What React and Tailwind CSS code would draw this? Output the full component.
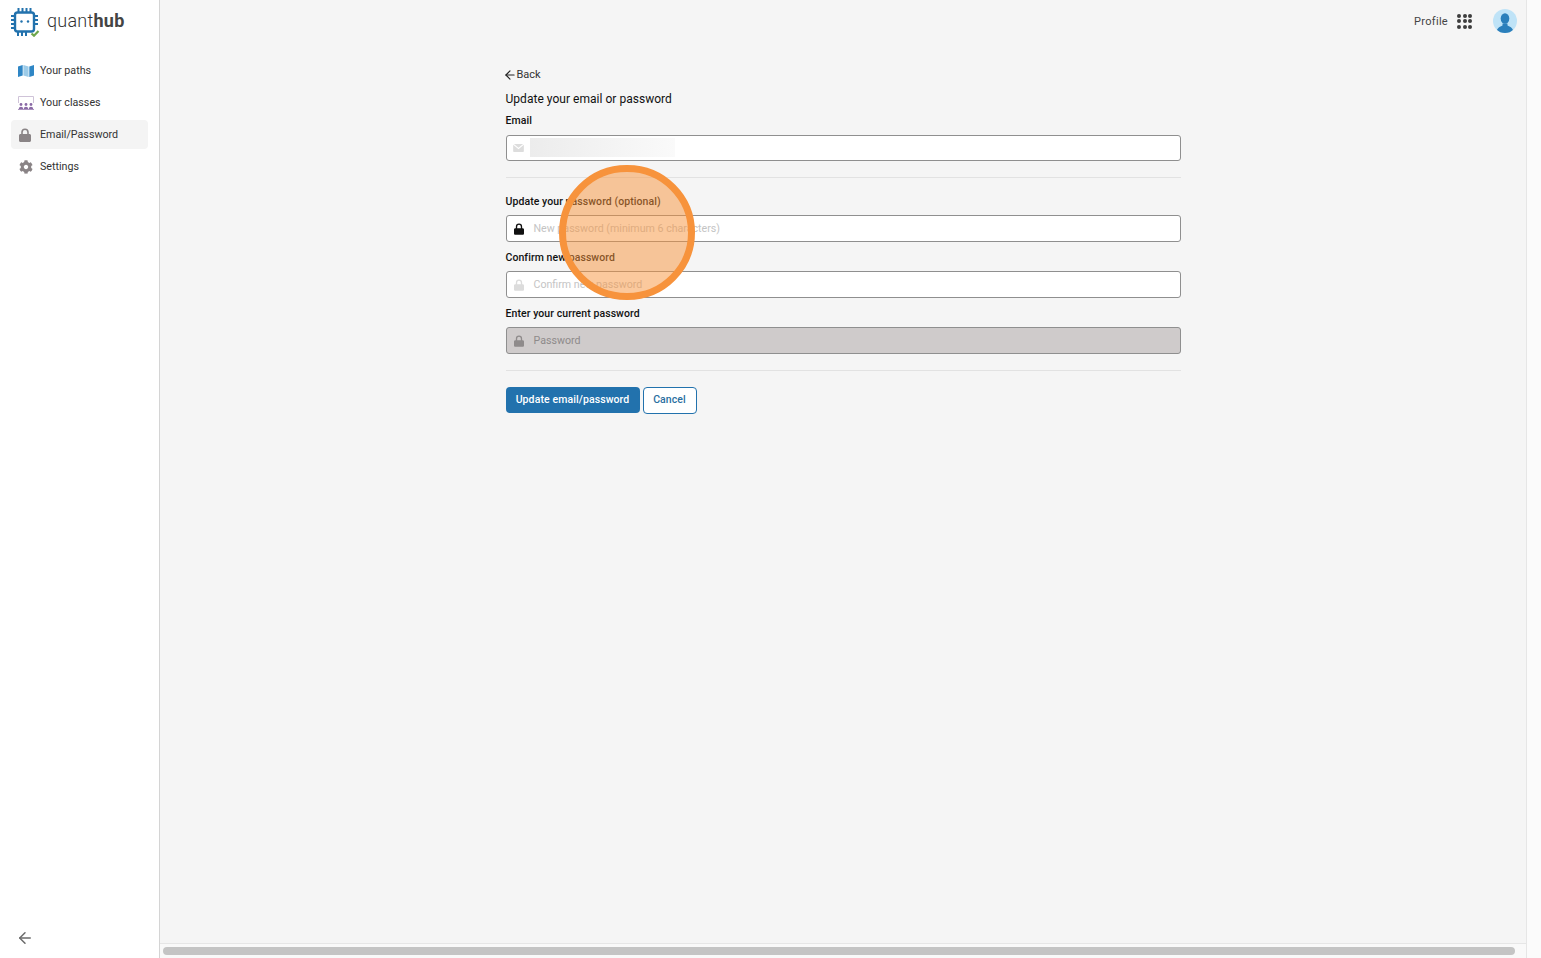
import React from "react";
import { ArrowLeft } from "lucide-react";
import { FaCog } from "react-icons/fa";

const Lock = ({ className }) => (
  <svg viewBox="0 0 12 14" className={className} fill="currentColor">
    <path d="M2.200 6V4.200a3.800 3.800 0 0 1 7.600 0V6h.7c.8 0 1.500.7 1.500 1.500v5c0 .8-.7 1.500-1.500 1.500h-9C.7 14 0 13.300 0 12.500v-5C0 6.700.7 6 1.500 6h.7zm1.600 0h4.400V4.200a2.200 2.200 0 0 0-4.400 0V6z" />
  </svg>
);

const Logo = () => (
  <svg viewBox="0 0 30 30" className="w-[30px] h-[30px] shrink-0" fill="none">
    <rect x="5" y="5.500" width="19" height="19" rx="2.500" stroke="#2272ad" strokeWidth="2.400" />
    <path d="M8.500 1v4M12.500 1v4M16.500 1v4M20.500 1v4M1 9h4M1 13h4M1 17h4M1 21h4M24 9h4M24 13h4M24 17h4M8 25v4M12 25v4M16 25v4" stroke="#2272ad" strokeWidth="2" />
    <circle cx="11.500" cy="14.500" r="1.200" fill="#2272ad" />
    <circle cx="18" cy="14.500" r="1.200" fill="#2272ad" />
    <path d="M21.500 26.500l2.500 2.200 4.500-4.700" stroke="#6fa64c" strokeWidth="2.200" />
  </svg>
);

const MapIcon = () => (
  <svg viewBox="0 0 16 12" className="w-[16px] h-[12px]">
    <path d="M0 1.500 4.700 0v10.500L0 12z" fill="#2f86c5" />
    <path d="M5.400 0l5.200 1.500V12L5.400 10.500z" fill="#9ccbe8" />
    <path d="M11.300 1.500 16 0v10.500L11.300 12z" fill="#2f86c5" />
  </svg>
);

const ClassIcon = () => (
  <svg viewBox="0 0 16 14" className="w-[16px] h-[14px]" fill="none">
    <path d="M.500 7V.500h15V7" stroke="#cfc3d8" strokeWidth="1" />
    <g fill="#8a6aa6">
      <circle cx="3" cy="8.500" r="1.400" />
      <circle cx="8" cy="8.500" r="1.400" />
      <circle cx="13" cy="8.500" r="1.400" />
      <path d="M.800 13c0-3 4.400-3 4.400 0zM5.800 13c0-3 4.400-3 4.400 0zM10.800 13c0-3 4.400-3 4.400 0z" />
    </g>
    <path d="M0 13.600h16" stroke="#8a6aa6" strokeWidth=".8" />
  </svg>
);

const NavItem = ({ icon, label, active }) => (
  <div className={`flex items-center h-[29px] pl-[7px] rounded-[4px] ${active ? "bg-[#f4f4f4]" : ""}`}>
    <span className="w-[22px] flex justify-start items-center">{icon}</span>
    <span className="text-[10.700px] pt-[2px] text-[#333333]">{label}</span>
  </div>
);

const Field = ({ icon, placeholder, disabled, h = "h-[27px]" }) => (
  <div className={`${h} flex items-center rounded-[3px] border border-[#8f8f8f] ${disabled ? "bg-[#cfcbcb]" : "bg-white"}`}>
    <span className="w-[27px] flex justify-center pr-[3px]">{icon}</span>
    <span className={`text-[10.650px] pt-[1px] ${disabled ? "text-[#8e8a8a]" : "text-[#c4c4c4]"}`}>{placeholder}</span>
  </div>
);

const Label = ({ children, className = "" }) => (
  <div className={`text-[10.500px] leading-[14px] tracking-[0.07px] font-medium text-[#111111] ${className}`}>{children}</div>
);

export default function App() {
  return (
    <div className="relative h-[958px] w-[1541px] overflow-hidden flex bg-white font-['Roboto',sans-serif]">
      <aside className="w-[160px] shrink-0 border-r border-[#d4d4d4] bg-white flex flex-col">
        <div className="flex items-center pl-[10px] pt-[7px] gap-[7px] h-[36px]">
          <Logo />
          <span className="text-[18px] leading-[26px] tracking-[0.25px] text-[#333333] -mt-[1px] font-light">
            quant<span className="font-bold text-[#444444]">hub</span>
          </span>
        </div>
        <nav className="mx-[11px] mt-[20px] w-[137px] flex flex-col gap-[3px]">
          <NavItem icon={<MapIcon />} label="Your paths" />
          <NavItem icon={<ClassIcon />} label="Your classes" />
          <NavItem icon={<Lock className="w-[12px] h-[14px] text-[#8a8486] ml-[1px]" />} label="Email/Password" active />
          <NavItem icon={<FaCog className="w-[14px] h-[14px] text-[#8a8486] ml-[1px]" />} label="Settings" />
        </nav>
        <div className="mt-auto pl-[16px] pb-[11px]">
          <ArrowLeft className="w-[18px] h-[18px] text-[#6b6b6b]" strokeWidth={2} />
        </div>
      </aside>

      <main className="w-[1367px] shrink-0 bg-[#f5f5f5] border-r border-[#e6e6e6] flex flex-col">
        <header className="h-[42px] shrink-0 flex items-center justify-end pr-[9px]">
          <span className="text-[11px] pt-[2px] tracking-[0.3px] text-[#444444] mr-[9px]">Profile</span>
          <div className="grid grid-cols-3 gap-x-[1.500px] gap-y-[1.500px] mr-[21px]">
            {Array.from({ length: 9 }).map((_, i) => (
              <span key={i} className="w-[4px] h-[4px] rounded-full bg-[#3d3d3d]" />
            ))}
          </div>
          <svg viewBox="0 0 24 24" className="w-[24px] h-[24px]">
            <defs>
              <clipPath id="avatarClip"><circle cx="12" cy="12" r="12" /></clipPath>
            </defs>
            <g clipPath="url(#avatarClip)">
              <rect width="24" height="24" fill="#bfe3f7" />
              <ellipse cx="12" cy="9.500" rx="4.300" ry="5.300" fill="#2b7fbb" />
              <path d="M3.500 24c0-5 3.500-6.500 6-7.500v-2h5v2c2.500 1 6 2.500 6 7.500z" fill="#2b7fbb" />
            </g>
          </svg>
        </header>

        <div className="flex-1 flex flex-col items-center">
          <form className="w-[675px] pt-[26px]">
            <div className="flex items-center h-[14px] text-[11px] text-[#333333]">
              <ArrowLeft className="w-[14px] h-[14px] text-[#222222] -ml-[3px]" strokeWidth={2} />
              <span>Back</span>
            </div>
            <h1 className="mt-[9px] text-[12px] leading-[16px] tracking-[0.03px] font-normal text-[#111111]">Update your email or password</h1>
            <Label className="mt-[7px]">Email</Label>
            <div className="mt-[7px] relative">
              <Field
                h="h-[26px]"
                icon={
                  <svg viewBox="0 0 12 9" className="w-[11px] h-[8px]" fill="#dddddd">
                    <path d="M.800 0h10.400L6 4.200zM0 .900V8.200c0 .5.300.800.800.800h10.400c.5 0 .8-.3.8-.8V.9L6 5.800z" />
                  </svg>
                }
                placeholder=""
              />
              <div className="absolute left-[24px] top-[3px] w-[145px] h-[19px] bg-gradient-to-r from-[#ececec] via-[#f3f3f3] to-[#fafafa]" />
            </div>
            <div className="mt-[16px] h-px bg-[#e2e2e2]" />
            <Label className="mt-[17px]">Update your password (optional)</Label>
            <div className="mt-[6px]">
              <Field icon={<Lock className="w-[10px] h-[12px] text-[#111111]" />} placeholder="New password (minimum 6 characters)" />
            </div>
            <Label className="mt-[9px]">Confirm new password</Label>
            <div className="mt-[6px]">
              <Field icon={<Lock className="w-[10px] h-[12px] text-[#dcdcdc]" />} placeholder="Confirm new password" />
            </div>
            <Label className="mt-[9px]">Enter your current password</Label>
            <div className="mt-[6px]">
              <Field disabled icon={<Lock className="w-[10px] h-[12px] text-[#8f8b8b]" />} placeholder="Password" />
            </div>
            <div className="mt-[16px] h-px bg-[#e2e2e2]" />
            <div className="mt-[16px] flex items-start gap-[3px]">
              <button type="button" className="h-[26px] w-[134px] rounded-[4px] bg-[#2272ad] text-white text-[10.500px] font-medium tracking-[0.1px]">
                Update email/password
              </button>
              <button type="button" className="h-[27px] w-[54px] pb-[2px] rounded-[4px] border border-[#2272ad] bg-white text-[#2a6f9f] text-[10.500px] font-medium tracking-[0.1px]">
                Cancel
              </button>
            </div>
          </form>
        </div>

        <div className="h-[15px] shrink-0 border-t border-[#e6e6e6] bg-[#f9f9f9] pl-[3px] pt-[3px]">
          <div className="h-[8px] w-[1352px] rounded-full bg-[#c4c4c4]" />
        </div>
      </main>

      <div className="flex-1 bg-[#fbfbfb]" />

      <div className="absolute left-[559px] top-[165px] w-[136px] h-[135px] rounded-full border-[7px] border-[#f7933c] bg-[#f7933c]/50" />
    </div>
  );
}
